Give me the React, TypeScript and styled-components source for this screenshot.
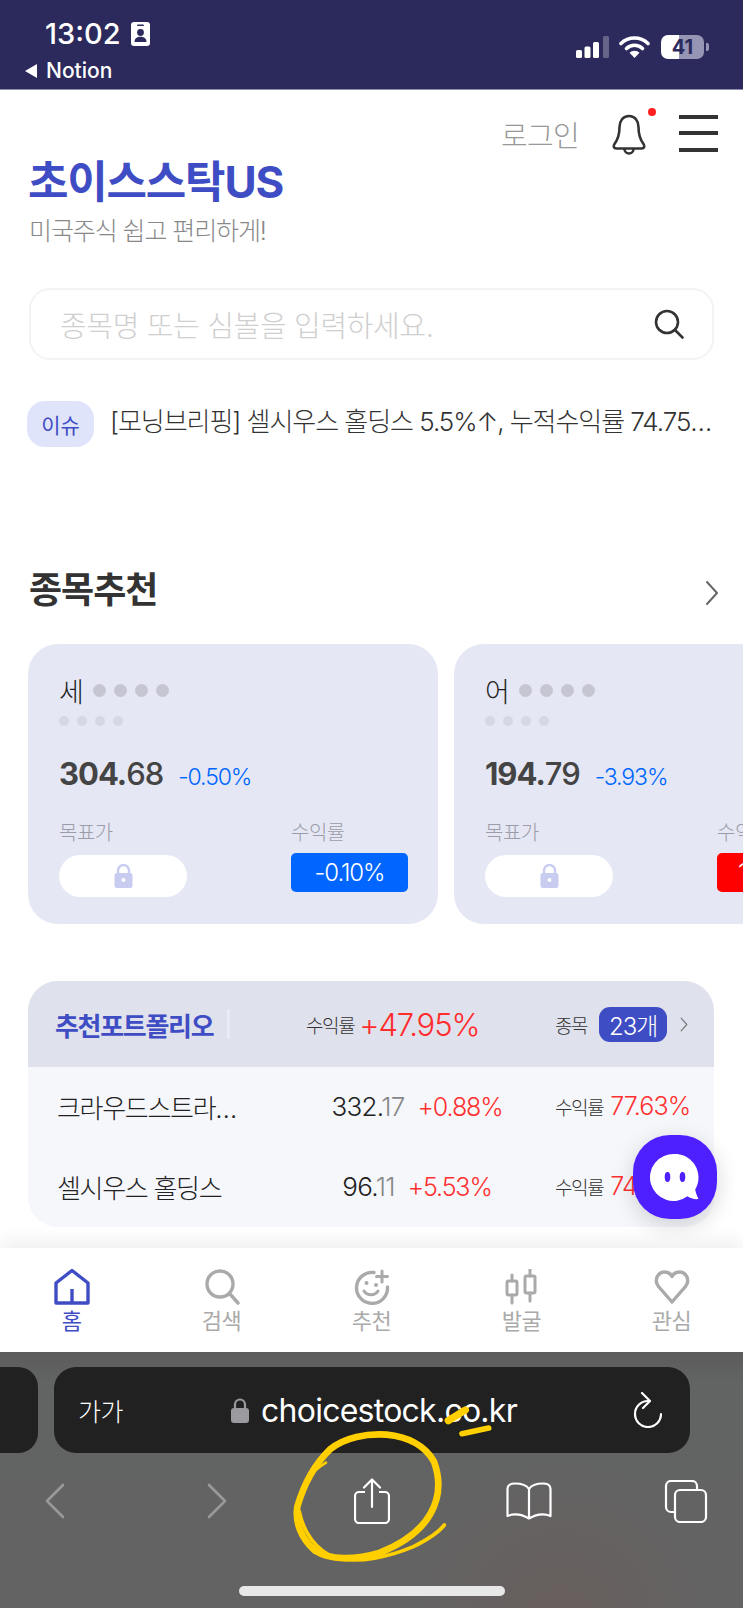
import React from "react";
import styled, { createGlobalStyle } from "styled-components";

const GlobalStyle = createGlobalStyle`
  html, body {
    margin: 0;
    padding: 0;
    background: #fff;
  }
  * {
    box-sizing: border-box;
  }
`;

const Page = styled.div`
  position: relative;
  width: 743px;
  height: 1608px;
  overflow: hidden;
  display: flex;
  flex-direction: column;
  background: #fff;
  font-family: Inter, "Noto Sans CJK KR", sans-serif;
`;

/* status bar */
const StatusBar = styled.div`
  height: 90px;
  flex: none;
  display: flex;
  justify-content: space-between;
  background: #2c2a5c;
  border-bottom: 1px solid #8d8cab;
  color: #fff;
`;

const StatusLeft = styled.div`
  padding: 17px 0 0 25px;
`;

const TimeRow = styled.div`
  display: flex;
  align-items: center;
  gap: 10px;
  margin-left: 20px;
  font-size: 29px;
  line-height: 34px;
  font-weight: 500;
`;

const BackApp = styled.div`
  display: flex;
  align-items: center;
  gap: 9px;
  margin-top: 7px;
  font-size: 21px;
  line-height: 26px;
  font-weight: 500;
`;

const BackTriangle = styled.span`
  width: 0;
  height: 0;
  border-style: solid;
  border-width: 7px 12px 7px 0;
  border-color: transparent #fff transparent transparent;
`;

const StatusRight = styled.div`
  display: flex;
  align-items: center;
  height: 24px;
  margin: 35px 34px 0 0;
`;

const Battery = styled.div<{ $level: number }>`
  width: 43px;
  height: 24px;
  margin-left: 11px;
  border-radius: 7px;
  display: flex;
  align-items: center;
  justify-content: center;
  font-size: 20px;
  font-weight: 700;
  color: #2c2a5c;
  background: linear-gradient(
    90deg,
    #fff ${(p) => p.$level}%,
    #9695b4 ${(p) => p.$level}%
  );
`;

const BatteryNub = styled.span`
  width: 3px;
  height: 8px;
  margin-left: 2px;
  border-radius: 0 2px 2px 0;
  background: #9695b4;
`;

/* main content */
const Main = styled.main`
  flex: 1;
  min-height: 0;
  position: relative;
  padding-top: 18px;
`;

const TopActions = styled.div`
  display: flex;
  justify-content: flex-end;
  align-items: center;
  height: 48px;
  padding-right: 25px;
`;

const LoginText = styled.span`
  font-size: 29px;
  font-weight: 300;
  letter-spacing: -0.7px;
  color: #999;
  margin-top: 3px;
`;

const BellWrap = styled.div`
  position: relative;
  width: 36px;
  height: 42px;
  margin: 6px 0 0 32px;
`;

const BellDot = styled.span`
  position: absolute;
  right: -9px;
  top: -6px;
  width: 8px;
  height: 8px;
  border-radius: 50%;
  background: #ff2020;
`;

const MenuButton = styled.div`
  width: 39px;
  height: 37px;
  margin: 2px 0 0 32px;
  display: flex;
  flex-direction: column;
  justify-content: space-between;
`;

const MenuLine = styled.span`
  height: 4px;
  background: #333;
`;

const Brand = styled.h1`
  margin: 1px 0 0 28px;
  height: 50px;
  font-size: 44px;
  line-height: 50px;
  font-weight: 700;
  letter-spacing: -1.2px;
  color: #3f4dc4;
`;

const Tagline = styled.p`
  margin: 5px 0 0 29px;
  font-size: 25px;
  font-weight: 300;
  line-height: 38px;
  letter-spacing: -1.1px;
  color: #888;
`;

const SearchBox = styled.div`
  display: flex;
  align-items: center;
  justify-content: space-between;
  height: 72px;
  margin: 38px 29px 0;
  padding: 0 28px 0 29px;
  border: 2px solid #f3f3f3;
  border-radius: 21px;
`;

const Placeholder = styled.span`
  font-size: 29px;
  font-weight: 300;
  letter-spacing: -0.35px;
  color: #cfcfcf;
`;

const IssueRow = styled.div`
  display: flex;
  align-items: center;
  height: 46px;
  margin: 41px 0 0 27px;
`;

const IssuePill = styled.span`
  flex: none;
  width: 67px;
  height: 46px;
  display: flex;
  align-items: center;
  justify-content: center;
  border-radius: 18px;
  background: #e0e4fb;
  color: #3f4dc4;
  font-size: 21px;
`;

const IssueText = styled.span`
  width: 612px;
  margin: -9px 0 0 16px;
  font-size: 26px;
  font-weight: 300;
  letter-spacing: -1.05px;
  color: #333;
  white-space: nowrap;
  overflow: hidden;
  text-overflow: ellipsis;
`;

const SectionHead = styled.div`
  display: flex;
  align-items: center;
  justify-content: space-between;
  height: 50px;
  margin-top: 115px;
  padding: 0 24px 0 29px;
`;

const SectionTitle = styled.h2`
  margin: 0;
  font-size: 36px;
  font-weight: 700;
  letter-spacing: -1px;
  color: #333;
`;

const SectionChevron = styled.span`
  display: flex;
  margin-top: 12px;
`;

const CardRow = styled.div`
  display: flex;
  gap: 16px;
  margin: 32px 0 0 28px;
`;

const Card = styled.article`
  flex: none;
  width: 410px;
  height: 280px;
  padding: 31px 30px 0 31px;
  border-radius: 30px;
  background: #e5e7f4;
`;

const NameRow = styled.div`
  display: flex;
  align-items: center;
  height: 30px;
  font-size: 27px;
  font-weight: 300;
  color: #222;
`;

const NameDots = styled.div`
  display: flex;
  gap: 8px;
  margin-left: 9px;
`;

const NameDot = styled.span`
  width: 13px;
  height: 13px;
  border-radius: 50%;
  background: #c5c6d2;
`;

const CodeDots = styled.div`
  display: flex;
  gap: 8px;
  margin: 11px 0 0 0;
`;

const CodeDot = styled.span`
  width: 10px;
  height: 10px;
  border-radius: 50%;
  background: #d6d7e4;
`;

const PriceRow = styled.div`
  display: flex;
  align-items: baseline;
  gap: 15px;
  margin-top: 26px;
  height: 44px;
  line-height: 44px;
`;

const Price = styled.span`
  font-size: 31px;
  font-weight: 500;
  letter-spacing: -1px;
  color: #444;
`;

const PriceInt = styled.b`
  font-weight: 700;
`;

const Change = styled.span`
  font-size: 23px;
  font-weight: 300;
  letter-spacing: -1.1px;
  color: #0066ff;
`;

const CardBottom = styled.div`
  display: grid;
  grid-template-columns: 232px 117px;
  margin-top: 23px;
`;

const MetricLabel = styled.div`
  height: 28px;
  line-height: 28px;
  font-size: 20px;
  font-weight: 300;
  letter-spacing: -0.5px;
  color: #9c9ca8;
`;

const LockPill = styled.div`
  width: 128px;
  height: 42px;
  margin-top: 8px;
  display: flex;
  align-items: center;
  justify-content: center;
  border-radius: 21px;
  background: #fff;
`;

const RateBadge = styled.div<{ $up?: boolean }>`
  height: 39px;
  margin-top: 6px;
  display: flex;
  align-items: center;
  justify-content: center;
  border-radius: 5px;
  font-size: 24px;
  font-weight: 300;
  letter-spacing: -1.1px;
  color: #fff;
  background: ${(p) => (p.$up ? "#ff0000" : "#0066ff")};
`;

const Portfolio = styled.section`
  height: 246px;
  margin: 57px 29px 0 28px;
  border-radius: 30px;
  overflow: hidden;
  background: #f6f7fb;
`;

const PortfolioHead = styled.div`
  display: flex;
  align-items: center;
  height: 86px;
  padding-left: 27px;
  background: #dfe2ed;
`;

const PortfolioTitle = styled.h3`
  width: 172px;
  margin: 0;
  font-size: 26px;
  font-weight: 700;
  letter-spacing: -1.3px;
  color: #3f4dc4;
`;

const HeadDivider = styled.span`
  width: 3px;
  height: 30px;
  background: #e8eaf4;
`;

const SmallLabel = styled.span`
  font-size: 19px;
  font-weight: 300;
  letter-spacing: -1.4px;
  color: #333;
`;

const TotalGroup = styled.div`
  display: flex;
  align-items: center;
  gap: 5px;
  width: 249px;
  margin-left: 76px;
`;

const TotalRate = styled.span`
  font-size: 31px;
  font-weight: 300;
  letter-spacing: -1.1px;
  color: #ff2d2d;
`;

const CountBadge = styled.span`
  width: 68px;
  height: 35px;
  margin-left: 12px;
  display: flex;
  align-items: center;
  justify-content: center;
  border-radius: 11px;
  background: #3f4dc4;
  color: #fff;
  font-size: 24px;
  font-weight: 300;
  letter-spacing: -1px;
`;

const HeadChevron = styled.span`
  display: flex;
  margin-left: 13px;
`;

const StockRow = styled.div`
  display: grid;
  grid-template-columns: 220px 253px auto;
  column-gap: 12px;
  align-items: center;
  height: 80px;
  padding: 0 0 2px 29px;
`;

const StockName = styled.span`
  max-width: 190px;
  font-size: 26px;
  font-weight: 300;
  letter-spacing: -1.3px;
  color: #222;
  white-space: nowrap;
  overflow: hidden;
  text-overflow: ellipsis;
`;

const StockName2 = styled(StockName)`
  max-width: 220px;
`;

const StockPrice = styled.div`
  display: flex;
  justify-content: center;
  align-items: baseline;
  gap: 13px;
  padding-left: 3px;
`;

const PriceText = styled.span`
  font-size: 26px;
  font-weight: 300;
  letter-spacing: -0.7px;
  color: #222;
`;

const PriceDec = styled.span`
  color: #888;
`;

const PctText = styled.span`
  font-size: 25px;
  font-weight: 300;
  letter-spacing: -1.1px;
  color: #ff3030;
`;

const StockReturn = styled.div`
  display: flex;
  align-items: center;
  gap: 7px;
  padding-left: 1px;
  white-space: nowrap;
`;

const ReturnValue = styled.span`
  font-size: 25px;
  font-weight: 300;
  letter-spacing: -0.9px;
  color: #ff3030;
`;

const ChatFab = styled.div`
  position: absolute;
  left: 633px;
  top: 1045px;
  width: 84px;
  height: 84px;
  display: flex;
  align-items: center;
  justify-content: center;
  border-radius: 37px;
  background: #4f20ff;
  box-shadow: 0 6px 22px rgba(0, 0, 0, 0.16);
`;

/* bottom tab bar */
const TabBar = styled.nav`
  position: relative;
  flex: none;
  height: 104px;
  display: grid;
  grid-template-columns: repeat(5, 150px);
  justify-content: center;
  padding-top: 21px;
  background: #fff;
  box-shadow: 0 -8px 16px rgba(0, 0, 0, 0.06);
`;

const TabItem = styled.div<{ $active?: boolean }>`
  display: flex;
  flex-direction: column;
  align-items: center;
  font-size: 22px;
  line-height: 30px;
  letter-spacing: -0.5px;
  color: ${(p) => (p.$active ? "#3f4dc4" : "#aaa")};
`;

const TabIcon = styled.svg`
  width: 36px;
  height: 36px;
  margin-bottom: 1px;
`;

/* safari chrome */
const Safari = styled.div`
  position: relative;
  flex: none;
  height: 256px;
  padding-top: 15px;
  background: radial-gradient(
      circle at 560px 270px,
      rgba(115, 85, 80, 0.3),
      transparent 160px
    ),
    linear-gradient(180deg, #5c5c5c 0, #626363 30px, #636363 100%);
`;

const AddressRow = styled.div`
  display: flex;
  gap: 16px;
`;

const PrevTab = styled.div`
  width: 38px;
  height: 86px;
  flex: none;
  border-radius: 0 20px 20px 0;
  background: #212121;
`;

const AddressBar = styled.div`
  position: relative;
  width: 636px;
  height: 86px;
  display: flex;
  align-items: center;
  border-radius: 22px;
  background: #212121;
  color: #fff;
`;

const FontSize = styled.span`
  position: absolute;
  left: 24px;
  font-size: 25px;
  font-weight: 300;
  letter-spacing: -0.5px;
`;

const UrlGroup = styled.div`
  display: flex;
  align-items: center;
  gap: 12px;
  margin-left: 177px;
  font-size: 32px;
  letter-spacing: -0.75px;
`;

const Reload = styled.svg`
  position: absolute;
  right: 27px;
  top: 25px;
  width: 30px;
  height: 36px;
`;

const Toolbar = styled.div`
  display: grid;
  grid-template-columns: 162px 147px 152px 158px auto;
  align-items: center;
  justify-items: start;
  height: 50px;
  margin-top: 23px;
  padding-left: 45px;
`;

const HomeBar = styled.div`
  width: 266px;
  height: 10px;
  margin: 60px auto 0;
  border-radius: 5px;
  background: #e8e8e8;
`;

const Scribble = styled.svg`
  position: absolute;
  left: 280px;
  top: 38px;
  width: 230px;
  height: 180px;
  pointer-events: none;
`;

const Chevron = ({ color = "#666", w = 14, h = 26 }: { color?: string; w?: number; h?: number }) => (
  <svg width={w} height={h} viewBox="0 0 14 26" fill="none">
    <path d="M2 2l10 11L2 24" stroke={color} strokeWidth="2" strokeLinecap="round" strokeLinejoin="round" />
  </svg>
);

const LockIcon = () => (
  <svg width="19" height="24" viewBox="0 0 19 24">
    <path d="M4 10V6.500a5.500 5.500 0 0 1 11 0V10" fill="none" stroke="#c8ccf0" strokeWidth="2.400" />
    <rect x="0.500" y="9" width="18" height="15" rx="2.500" fill="#c8ccf0" />
    <circle cx="9.500" cy="16" r="2" fill="#fff" />
  </svg>
);

interface StockCardProps {
  initial: string;
  whole: string;
  decimal: string;
  change: string;
  rate: string;
  up?: boolean;
}

const StockCard = ({ initial, whole, decimal, change, rate, up }: StockCardProps) => (
  <Card>
    <NameRow>
      {initial}
      <NameDots>
        {[0, 1, 2, 3].map((i) => (
          <NameDot key={i} />
        ))}
      </NameDots>
    </NameRow>
    <CodeDots>
      {[0, 1, 2, 3].map((i) => (
        <CodeDot key={i} />
      ))}
    </CodeDots>
    <PriceRow>
      <Price>
        <PriceInt>{whole}</PriceInt>
        {decimal}
      </Price>
      <Change>{change}</Change>
    </PriceRow>
    <CardBottom>
      <div>
        <MetricLabel>목표가</MetricLabel>
        <LockPill>
          <LockIcon />
        </LockPill>
      </div>
      <div>
        <MetricLabel>수익률</MetricLabel>
        <RateBadge $up={up}>{rate}</RateBadge>
      </div>
    </CardBottom>
  </Card>
);

export default function App() {
  return (
    <Page>
      <GlobalStyle />
      <StatusBar>
        <StatusLeft>
          <TimeRow>
            13:02
            <svg width="19" height="24" viewBox="0 0 19 24">
              <rect width="19" height="24" rx="3" fill="#fff" />
              <rect x="6" y="2.500" width="7" height="1.600" rx="0.800" fill="#2c2a5c" />
              <circle cx="9.500" cy="10.500" r="3.400" fill="#2c2a5c" />
              <path d="M3.500 20c0-3.600 2.600-5.200 6-5.200s6 1.600 6 5.200z" fill="#2c2a5c" />
            </svg>
          </TimeRow>
          <BackApp>
            <BackTriangle />
            Notion
          </BackApp>
        </StatusLeft>
        <StatusRight>
          <svg width="33" height="22" viewBox="0 0 33 22">
            <rect x="0" y="14" width="6" height="8" rx="1.500" fill="#fff" />
            <rect x="8.500" y="10.500" width="6" height="11.500" rx="1.500" fill="#fff" />
            <rect x="17" y="6" width="6" height="16" rx="1.500" fill="#fff" />
            <rect x="27" y="0" width="6" height="22" rx="1.500" fill="#fff" opacity="0.28" />
          </svg>
          <svg width="31" height="22" viewBox="0 0 31 22" style={{ marginLeft: 10 }}>
            <path d="M2 7.500a19.500 19.500 0 0 1 27 0" fill="none" stroke="#fff" strokeWidth="3.600" strokeLinecap="round" />
            <path d="M7.500 12.500a11.500 11.500 0 0 1 16 0" fill="none" stroke="#fff" strokeWidth="3.600" strokeLinecap="round" />
            <path d="M15.500 22l-5-5.200a7 7 0 0 1 10 0z" fill="#fff" />
          </svg>
          <Battery $level={41}>41</Battery>
          <BatteryNub />
        </StatusRight>
      </StatusBar>

      <Main>
        <TopActions>
          <LoginText>로그인</LoginText>
          <BellWrap>
            <svg width="36" height="42" viewBox="0 0 36 42" fill="none">
              <path
                d="M18 2c-6 0-9.500 5-9.500 11 0 8-2 13-5 17-1.500 2-1 4.500 2 4.500h25c3 0 3.500-2.500 2-4.500-3-4-5-9-5-17 0-6-3.500-11-9.500-11z"
                stroke="#333"
                strokeWidth="2.600"
                strokeLinejoin="round"
              />
              <path d="M13.500 35a4.500 4.500 0 0 0 9 0" stroke="#333" strokeWidth="2.600" />
            </svg>
            <BellDot />
          </BellWrap>
          <MenuButton>
            <MenuLine />
            <MenuLine />
            <MenuLine />
          </MenuButton>
        </TopActions>
        <Brand>초이스스탁US</Brand>
        <Tagline>미국주식 쉽고 편리하게!</Tagline>
        <SearchBox>
          <Placeholder>종목명 또는 심볼을 입력하세요.</Placeholder>
          <svg width="30" height="30" viewBox="0 0 30 30" fill="none">
            <circle cx="13" cy="13" r="11" stroke="#333" strokeWidth="2.600" />
            <path d="M21 21l7.500 7.500" stroke="#333" strokeWidth="2.600" strokeLinecap="round" />
          </svg>
        </SearchBox>
        <IssueRow>
          <IssuePill>이슈</IssuePill>
          <IssueText>[모닝브리핑] 셀시우스 홀딩스 5.5%↑, 누적수익률 74.75% 달성</IssueText>
        </IssueRow>
        <SectionHead>
          <SectionTitle>종목추천</SectionTitle>
          <SectionChevron>
            <Chevron />
          </SectionChevron>
        </SectionHead>
        <CardRow>
          <StockCard initial="세" whole="304." decimal="68" change="-0.50%" rate="-0.10%" />
          <StockCard initial="어" whole="194." decimal="79" change="-3.93%" rate="13.50%" up />
        </CardRow>
        <Portfolio>
          <PortfolioHead>
            <PortfolioTitle>추천포트폴리오</PortfolioTitle>
            <HeadDivider />
            <TotalGroup>
              <SmallLabel>수익률</SmallLabel>
              <TotalRate>+47.95%</TotalRate>
            </TotalGroup>
            <SmallLabel>종목</SmallLabel>
            <CountBadge>23개</CountBadge>
            <HeadChevron>
              <Chevron color="#777" w={8} h={17} />
            </HeadChevron>
          </PortfolioHead>
          <StockRow>
            <StockName>크라우드스트라이크</StockName>
            <StockPrice>
              <PriceText>
                332.<PriceDec>17</PriceDec>
              </PriceText>
              <PctText>+0.88%</PctText>
            </StockPrice>
            <StockReturn>
              <SmallLabel>수익률</SmallLabel>
              <ReturnValue>77.63%</ReturnValue>
            </StockReturn>
          </StockRow>
          <StockRow>
            <StockName2>셀시우스 홀딩스</StockName2>
            <StockPrice>
              <PriceText>
                96.<PriceDec>11</PriceDec>
              </PriceText>
              <PctText>+5.53%</PctText>
            </StockPrice>
            <StockReturn>
              <SmallLabel>수익률</SmallLabel>
              <ReturnValue>74.75%</ReturnValue>
            </StockReturn>
          </StockRow>
        </Portfolio>
        <ChatFab>
          <svg width="52" height="52" viewBox="0 0 52 52">
            <path
              d="M26 3c13 0 23.500 10.500 23.500 23.500 0 4.500-1.200 8.500-3.300 12 .5 3 1.500 6 3.300 9.500-4 .5-8-.5-11-2.700A23.500 23.500 0 1 1 26 3z"
              fill="#fff"
            />
            <ellipse cx="18.500" cy="26" rx="2.800" ry="5" fill="#4f20ff" />
            <ellipse cx="33.500" cy="26" rx="2.800" ry="5" fill="#4f20ff" />
          </svg>
        </ChatFab>
      </Main>

      <TabBar>
        <TabItem $active>
          <TabIcon viewBox="0 0 36 36" fill="none">
            <path d="M2 14L18 1.500 34 14v20H2z" stroke="#3f4dc4" strokeWidth="3.400" strokeLinejoin="round" />
            <path d="M18 20v14" stroke="#3f4dc4" strokeWidth="3.400" />
          </TabIcon>
          홈
        </TabItem>
        <TabItem>
          <TabIcon viewBox="0 0 36 36" fill="none">
            <circle cx="16" cy="15" r="13" stroke="#aaa" strokeWidth="3.400" />
            <path d="M26 25l8 9" stroke="#aaa" strokeWidth="3.400" strokeLinecap="round" />
          </TabIcon>
          검색
        </TabItem>
        <TabItem>
          <TabIcon viewBox="0 0 36 36" fill="none">
            <path d="M20 3.500A15.500 15.500 0 1 0 33.500 18" stroke="#aaa" strokeWidth="3.400" strokeLinecap="round" />
            <path d="M28 2v11M22.500 7.500h11" stroke="#aaa" strokeWidth="3" strokeLinecap="round" />
            <circle cx="12.500" cy="14" r="2" fill="#aaa" />
            <circle cx="22" cy="16" r="2" fill="#aaa" />
            <path d="M10 22c3 5 11 5 14 0" stroke="#aaa" strokeWidth="3" strokeLinecap="round" />
          </TabIcon>
          추천
        </TabItem>
        <TabItem>
          <TabIcon viewBox="0 0 36 36" fill="none">
            <path d="M8 6v6M8 26v8M26 0v7M26 24v8" stroke="#aaa" strokeWidth="3" strokeLinecap="round" />
            <rect x="3" y="12" width="10" height="14" rx="1.500" stroke="#aaa" strokeWidth="3" />
            <rect x="21" y="7" width="10" height="17" rx="1.500" stroke="#aaa" strokeWidth="3" />
          </TabIcon>
          발굴
        </TabItem>
        <TabItem>
          <TabIcon viewBox="0 0 36 36" fill="none">
            <path
              d="M18 33L4.500 17.500C-.5 11 4 3 10.500 3c3.500 0 6 1.500 7.500 4.500C19.500 4.500 22 3 25.500 3 32 3 36.500 11 31.500 17.500z"
              stroke="#aaa"
              strokeWidth="3.400"
              strokeLinejoin="round"
            />
          </TabIcon>
          관심
        </TabItem>
      </TabBar>

      <Safari>
        <AddressRow>
          <PrevTab />
          <AddressBar>
            <FontSize>가가</FontSize>
            <UrlGroup>
              <svg width="18" height="25" viewBox="0 0 18 25">
                <path d="M4 11V6.500a5 5 0 0 1 10 0V11" fill="none" stroke="#9a9a9f" strokeWidth="2.200" />
                <rect y="10" width="18" height="15" rx="3" fill="#9a9a9f" />
              </svg>
              choicestock.co.kr
            </UrlGroup>
            <Reload viewBox="0 0 30 36" fill="none">
              <path d="M15 9A13 13 0 1 0 28 22" stroke="#fff" strokeWidth="2.200" strokeLinecap="round" />
              <path d="M9 1l8 8-7 7" stroke="#fff" strokeWidth="2.200" strokeLinecap="round" strokeLinejoin="round" />
            </Reload>
          </AddressBar>
        </AddressRow>
        <Toolbar>
          <svg width="20" height="36" viewBox="0 0 20 36" fill="none">
            <path d="M18 2L2 18l16 16" stroke="#999" strokeWidth="2.600" strokeLinecap="round" strokeLinejoin="round" />
          </svg>
          <svg width="20" height="36" viewBox="0 0 20 36" fill="none">
            <path d="M2 2l16 16L2 34" stroke="#999" strokeWidth="2.600" strokeLinecap="round" strokeLinejoin="round" />
          </svg>
          <svg width="36" height="46" viewBox="0 0 36 46" fill="none">
            <path
              d="M11 14H5a4 4 0 0 0-4 4v23a4 4 0 0 0 4 4h26a4 4 0 0 0 4-4V18a4 4 0 0 0-4-4h-6"
              stroke="#fff"
              strokeWidth="2.200"
            />
            <path d="M18 29V2M10 9.500L18 1.500l8 8" stroke="#fff" strokeWidth="2.200" strokeLinecap="round" strokeLinejoin="round" />
          </svg>
          <svg width="46" height="38" viewBox="0 0 46 38" fill="none">
            <path
              d="M23 7C20 2.500 15 1.500 9 1.500 5 1.500 1.500 3 1.500 7v27c5-2 13-2.500 21.500 2.500 8.500-5 16.500-4.500 21.500-2.500V7c0-4-3.500-5.500-7.500-5.500-6 0-11 1-14 5.500zM23 7v29"
              stroke="#fff"
              strokeWidth="2.200"
              strokeLinejoin="round"
            />
          </svg>
          <svg width="44" height="43" viewBox="0 0 44 43" fill="none">
            <path d="M11 32H7a5 5 0 0 1-5-5V6a5 5 0 0 1 5-5h21a5 5 0 0 1 5 5v4" stroke="#fff" strokeWidth="2.200" />
            <rect x="11" y="10" width="31" height="32" rx="5" stroke="#fff" strokeWidth="2.200" />
          </svg>
        </Toolbar>
        <HomeBar />
        {/* hand drawn marks on top of the screenshot */}
        <Scribble viewBox="0 0 690 540" fill="none" strokeLinecap="round" strokeLinejoin="round">
          <path
            d="M52 350C45 395 62 445 105 482C150 510 220 512 300 488C365 462 420 428 452 370C480 320 482 270 462 215C435 165 380 140 320 134C260 130 195 142 150 178C115 212 75 270 52 350"
            stroke="#ffcf00"
            strokeWidth="20"
          />
          <path d="M138 218C118 230 100 245 88 262" stroke="#ffcf00" strokeWidth="8" />
          <path d="M58 365C70 425 105 478 165 504C240 520 330 500 400 470C440 450 475 428 493 405" stroke="#ffcf00" strokeWidth="11" />
          <path d="M505 92L556 60" stroke="#ffcf00" strokeWidth="22" />
          <path d="M546 131L626 114" stroke="#ffcf00" strokeWidth="17" />
        </Scribble>
      </Safari>
    </Page>
  );
}
